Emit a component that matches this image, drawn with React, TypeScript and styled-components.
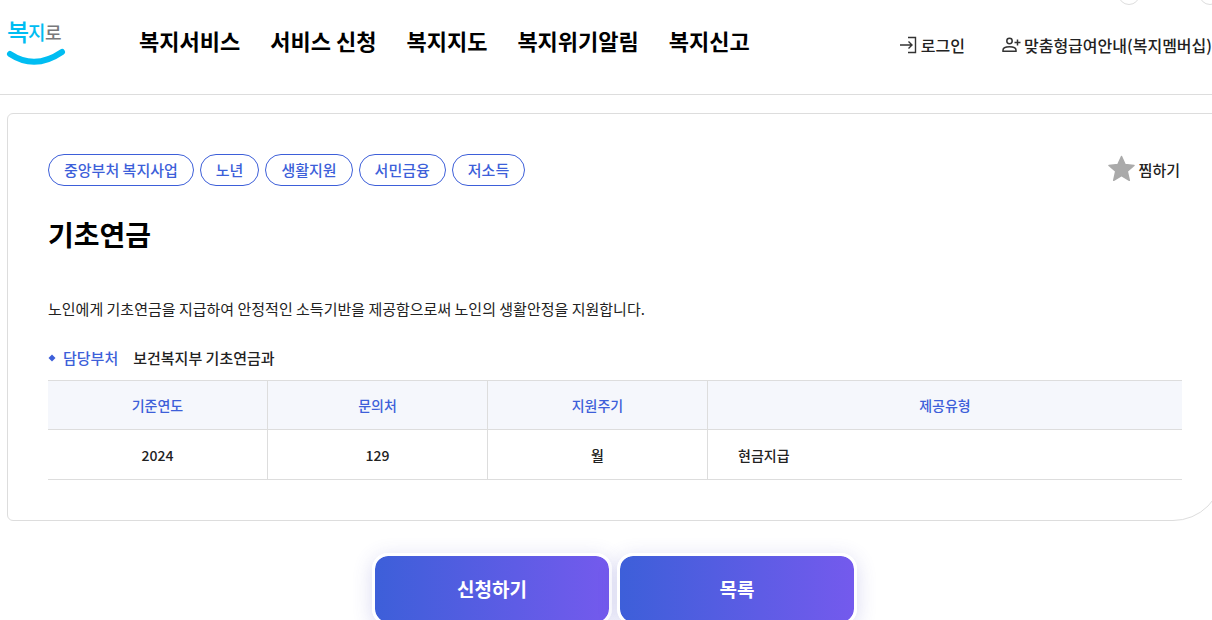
import React from "react";
import styled, { createGlobalStyle } from "styled-components";

const line = "#dddddd";
const blue = "#3d5fd9";

const GlobalStyle = createGlobalStyle`
  *, *::before, *::after { box-sizing: border-box; }
  body {
    margin: 0;
    background: #fff;
    color: #222;
    font-family: "Noto Sans CJK KR", "Noto Sans", sans-serif;
    font-size: 15px;
    line-height: 22px;
  }
  h1, p, dl, dd, ul { margin: 0; padding: 0; }
`;

const Page = styled.div`
  overflow-x: clip;
`;

const Header = styled.header`
  display: flex;
  align-items: flex-start;
  height: 95px;
  padding-left: 7px;
  border-bottom: 1px solid ${line};
`;

const LogoLink = styled.a`
  flex: none;
  width: 60px;
  margin: 12px 72px 0 0;
  svg { display: block; overflow: visible; }
`;

const Nav = styled.nav`
  display: flex;
  gap: 30px;
  padding-top: 25px;
`;

const NavLink = styled.a`
  color: #000;
  font-size: 22px;
  font-weight: 700;
  line-height: 30px;
  white-space: nowrap;
  text-decoration: none;
`;

const Side = styled.div`
  display: flex;
  flex-direction: column;
  align-items: flex-end;
  margin-left: auto;
`;

const ZoomTools = styled.div`
  display: flex;
  gap: 59px;
  height: 5px;
  margin-right: -9px;
  overflow: hidden;
  align-items: flex-end;
`;

const ZoomButton = styled.button`
  flex: none;
  width: 22px;
  height: 22px;
  padding: 0;
  border: 1px solid #ddd;
  border-radius: 50%;
  background: #fff;
`;

const UserMenu = styled.div`
  display: flex;
  gap: 37px;
  padding-top: 28px;
`;

const UserLink = styled.a`
  display: flex;
  align-items: center;
  gap: 3px;
  color: #222;
  font-size: 16px;
  font-weight: 500;
  line-height: 24px;
  white-space: nowrap;
  text-decoration: none;
`;

const Card = styled.main`
  margin: 18px -11px 0 7px;
  padding: 40px;
  border: 1px solid ${line};
  border-radius: 6px 6px 50px 6px;
`;

const CardTop = styled.div`
  display: flex;
  justify-content: space-between;
  align-items: center;
`;

const Tags = styled.ul`
  display: flex;
  gap: 6px;
  list-style: none;
`;

const Tag = styled.li`
  height: 32px;
  padding: 0 15px;
  border: 1px solid ${blue};
  border-radius: 16px;
  color: ${blue};
  font-weight: 500;
  line-height: 30px;
  white-space: nowrap;
`;

const WishButton = styled.button`
  display: flex;
  align-items: center;
  gap: 4px;
  padding: 0;
  margin-right: 2px;
  border: 0;
  background: none;
  color: #222;
  font: inherit;
  font-weight: 500;
`;

const Title = styled.h1`
  margin-top: 27px;
  font-size: 28px;
  font-weight: 700;
  line-height: 42px;
  color: #000;
`;

const Summary = styled.p`
  margin-top: 43px;
`;

const Department = styled.dl`
  display: flex;
  align-items: center;
  margin-top: 27px;
  font-weight: 500;
  dt {
    display: flex;
    align-items: center;
    gap: 7px;
    margin-right: 15px;
    color: ${blue};
  }
`;

const InfoTable = styled.table`
  width: 100%;
  margin-top: 11px;
  border-collapse: separate;
  border-spacing: 0;
  border-top: 1px solid ${line};
  table-layout: fixed;
  font-size: 14px;
  line-height: 20px;
`;

const Cell = styled.td<{ $left?: boolean }>`
  height: 50px;
  padding: 0 ${(p) => (p.$left ? 30 : 0)}px;
  border: 0 solid ${line};
  border-bottom-width: 1px;
  text-align: ${(p) => (p.$left ? "left" : "center")};
  font-weight: 500;
  &:not(:last-child) { border-right-width: 1px; }
`;

const HeadCell = styled(Cell)`
  height: 49px;
  background: #f5f7fc;
  color: ${blue};
`;

const Actions = styled.div`
  display: flex;
  justify-content: center;
  gap: 5px;
  margin: 32px 0 0 17px;
`;

const ActionButton = styled.button`
  width: 240px;
  height: 72px;
  padding: 0;
  border: 3px solid #fff;
  border-radius: 16px;
  background: linear-gradient(90deg, #3d5fd9, #745aed) padding-box;
  box-shadow: 0 4px 20px rgba(70, 70, 190, 0.2);
  color: #fff;
  font: inherit;
  font-size: 19px;
  font-weight: 700;
`;

const menu = ["복지서비스", "서비스 신청", "복지지도", "복지위기알림", "복지신고"];
const tags = ["중앙부처 복지사업", "노년", "생활지원", "서민금융", "저소득"];

function Logo() {
  return (
    <svg width="60" height="56" viewBox="0 0 60 56" fontWeight="500">
      <text x="0" y="29" fontSize="24" fill="#00bdf2">복</text>
      <text x="21" y="28" fontSize="19" fill="#00bdf2">지</text>
      <text x="38" y="28" fontSize="18" fill="#77787b">로</text>
      <path d="M3 42Q28 58.500 55 40" fill="none" stroke="#00bdf2" strokeWidth="6" strokeLinecap="round" />
    </svg>
  );
}

function LoginIcon() {
  return (
    <svg width="18" height="18" viewBox="0 0 18 18" fill="none" stroke="#333" strokeWidth="1.4">
      <path d="M8 1.500h7.500v15H8M0 9h12M8.500 5.500 12 9l-3.500 3.500" />
    </svg>
  );
}

function MemberIcon() {
  return (
    <svg width="19" height="18" viewBox="0 0 19 18" fill="none" stroke="#333" strokeWidth="1.500">
      <circle cx="7.500" cy="5" r="2.700" />
      <path d="M1 15.300v-1.300c0-2 3-3.300 6.500-3.300s6.500 1.300 6.500 3.300v1.300zM12.500 6.500h6M15.500 3.500v6" />
    </svg>
  );
}

export default function App() {
  return (
    <Page>
      <GlobalStyle />
      <Header>
        <LogoLink href="#" aria-label="복지로"><Logo /></LogoLink>
        <Nav>
          {menu.map((m) => <NavLink key={m} href="#">{m}</NavLink>)}
        </Nav>
        <Side>
          <ZoomTools>
            <ZoomButton aria-label="축소" />
            <ZoomButton aria-label="확대" />
          </ZoomTools>
          <UserMenu>
            <UserLink href="#"><LoginIcon />로그인</UserLink>
            <UserLink href="#"><MemberIcon />맞춤형급여안내(복지멤버십)</UserLink>
          </UserMenu>
        </Side>
      </Header>
      <Card>
        <CardTop>
          <Tags>{tags.map((t) => <Tag key={t}>{t}</Tag>)}</Tags>
          <WishButton>
            <svg width="27" height="30" viewBox="0 0 27 30">
              <path d="M13.500 1.500l3.600 8 8.900.9-6.700 5.900 2 9-7.800-4.600-7.800 4.600 2-9L1 10.400l8.900-.9z" fill="#aaa" stroke="#aaa" strokeWidth="1.500" strokeLinejoin="round" />
            </svg>
            찜하기
          </WishButton>
        </CardTop>
        <Title>기초연금</Title>
        <Summary>노인에게 기초연금을 지급하여 안정적인 소득기반을 제공함으로써 노인의 생활안정을 지원합니다.</Summary>
        <Department>
          <dt>
            <svg width="8" height="8" viewBox="0 0 8 8"><path d="M4 .500 7.500 4 4 7.500.500 4z" fill={blue} /></svg>
            담당부처
          </dt>
          <dd>보건복지부 기초연금과</dd>
        </Department>
        <InfoTable>
          <colgroup>
            <col width="220" /><col width="220" /><col width="220" /><col />
          </colgroup>
          <thead>
            <tr>
              {["기준연도", "문의처", "지원주기", "제공유형"].map((h) => <HeadCell as="th" key={h}>{h}</HeadCell>)}
            </tr>
          </thead>
          <tbody>
            <tr>
              <Cell>2024</Cell>
              <Cell>129</Cell>
              <Cell>월</Cell>
              <Cell $left>현금지급</Cell>
            </tr>
          </tbody>
        </InfoTable>
      </Card>
      <Actions>
        <ActionButton>신청하기</ActionButton>
        <ActionButton>목록</ActionButton>
      </Actions>
    </Page>
  );
}
